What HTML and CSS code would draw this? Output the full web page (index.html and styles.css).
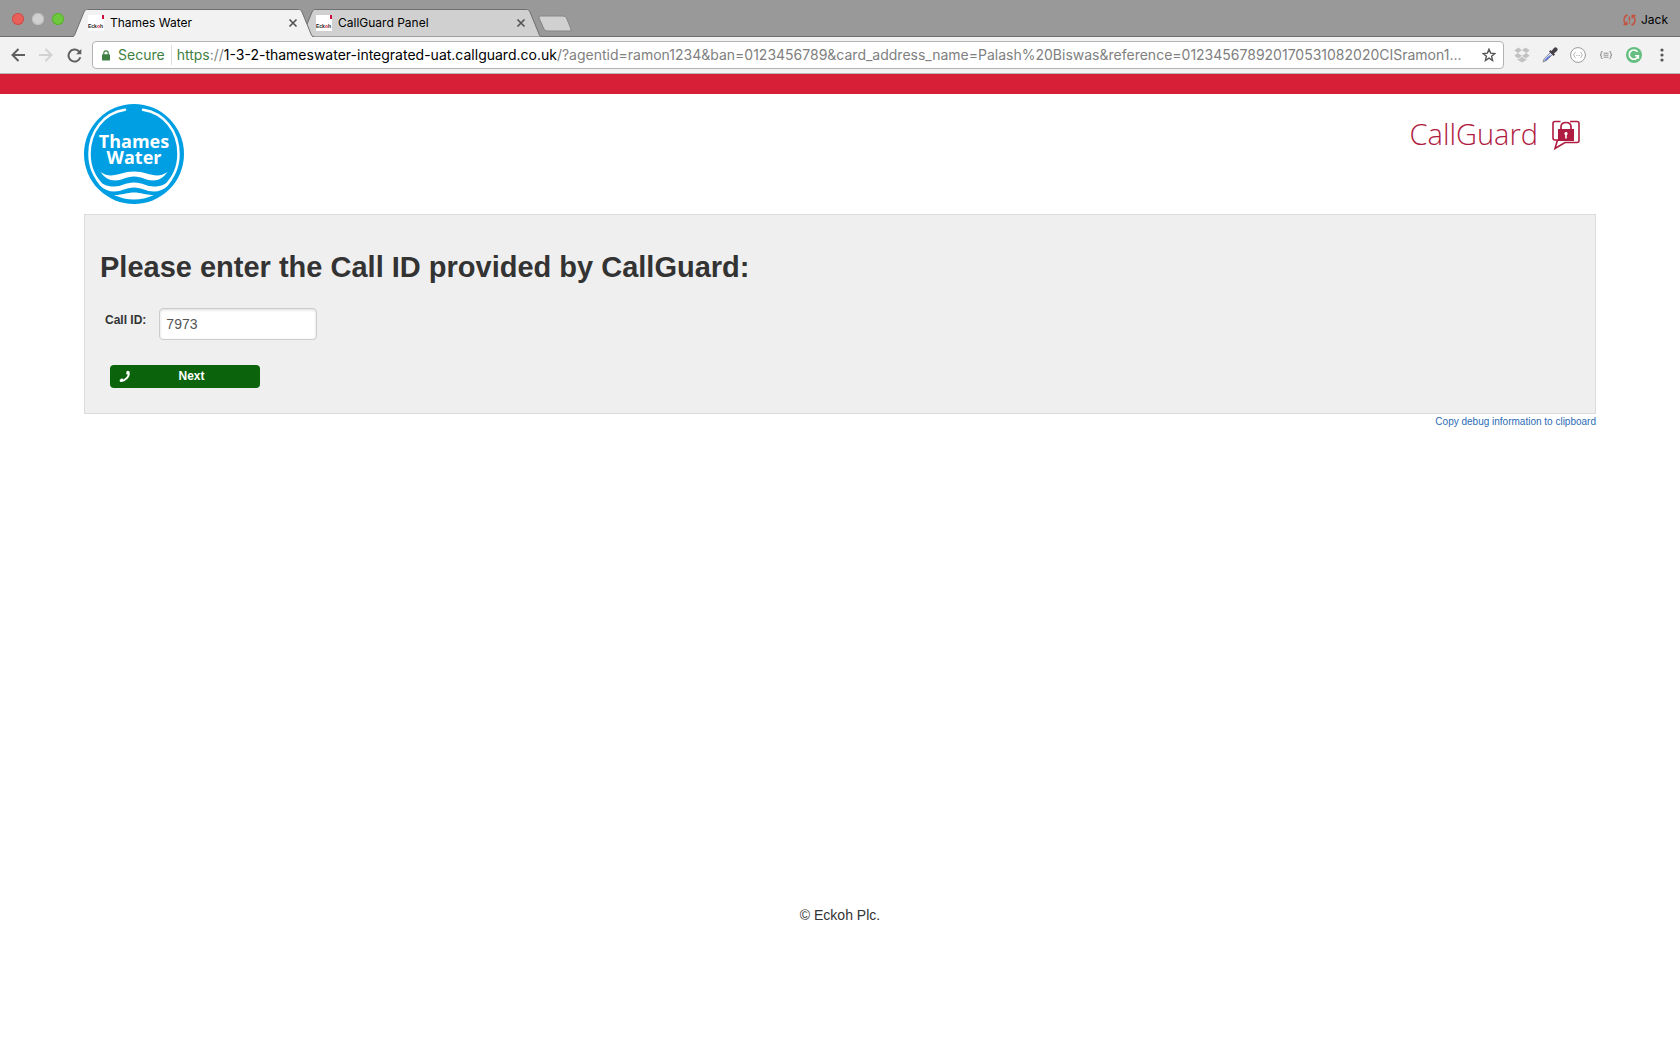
FILE: index.html
```html
<!DOCTYPE html>
<html lang="en">
<head>
<meta charset="utf-8">
<title>Thames Water</title>
<link rel="stylesheet" href="styles.css">
</head>
<body>
<svg class="defs" aria-hidden="true">
  <symbol id="tab-shape" viewBox="0 0 242 28"><path d="M0 27.500 C2 27.500 2.500 26.500 3 25 L12 3 C13 1 13.500 .5 15.500 .5 H226.500 C228.500 .5 229 1 230 3 L239 25 C239.500 26.500 240 27.500 242 27.500"/></symbol>
  <symbol id="close" viewBox="0 0 10 10"><path d="M1.500 1.500 8.500 8.500M8.500 1.500 1.500 8.500" stroke="#555" stroke-width="1.700"/></symbol>
</svg>

<header class="browser">
  <div class="tabstrip">
    <div class="lights"><i class="light red"></i><i class="light grey"></i><i class="light green"></i></div>
    <div class="tabs">
      <div class="tab active">
        <svg class="tab-bg"><use href="#tab-shape"/></svg>
        <svg class="favicon" viewBox="0 0 16 16"><rect width="16" height="16" fill="#fff"/><text x="0" y="13">Eck<tspan fill="#d0103a">o</tspan>h</text><rect x="14" y="0" width="2" height="4" fill="#d0103a"/></svg>
        <span class="tab-title">Thames Water</span>
        <button class="tab-close" aria-label="Close tab"><svg><use href="#close"/></svg></button>
      </div>
      <div class="tab">
        <svg class="tab-bg"><use href="#tab-shape"/></svg>
        <svg class="favicon" viewBox="0 0 16 16"><rect width="16" height="16" fill="#fff"/><text x="0" y="13">Eck<tspan fill="#d0103a">o</tspan>h</text><rect x="14" y="0" width="2" height="4" fill="#d0103a"/></svg>
        <span class="tab-title">CallGuard Panel</span>
        <button class="tab-close" aria-label="Close tab"><svg><use href="#close"/></svg></button>
      </div>
    </div>
    <button class="new-tab" aria-label="New tab"><svg width="34" height="18" viewBox="0 0 34 18"><path d="M2.500 1 H25 Q27.500 1 28.500 3 L33 14 Q33.500 16 31.500 16 H9 Q7 16 6 14 L1 3 Q.5 1 2.500 1Z" fill="#d0d0d0" stroke="#858585"/></svg></button>
    <button class="profile"><svg width="13" height="12" viewBox="0 0 13 12" fill="none" stroke="#c5503f" stroke-width="1.400"><path d="M4.500 1 C.5 2 0 8 3 10.500 M.5 10.500 H3.700 V7.500 M8.500 11 C12.500 10 13 4 10 1.500 M12.500 1.500 H9.300 V4.500 M6.500 2.500 V7 M6.500 8.300 V9.800"/></svg>Jack</button>
  </div>
  <div class="toolbar">
    <div class="navs">
      <button class="nav" aria-label="Back"><svg width="14" height="14" viewBox="0 0 14 14" stroke="#5f5f5f"><path d="M14 7H1.500M7.500 1 1.500 7l6 6"/></svg></button>
      <button class="nav" aria-label="Forward"><svg width="14" height="14" viewBox="0 0 14 14" stroke="#d2d2d2"><path d="M0 7H12.500M6.500 1l6 6-6 6"/></svg></button>
      <button class="nav" aria-label="Reload"><svg width="15" height="15" viewBox="0 0 15 15" stroke="#5f5f5f"><path d="M13.300 9.300A6 6 0 1 1 11.800 3.300L13 4.500"/><path d="M14.300 1V6.200H9.100Z" fill="#5f5f5f" stroke="none"/></svg></button>
    </div>
    <div class="omnibox">
      <svg width="8" height="11" viewBox="0 0 9 12"><path d="M2 6V3.300a2.500 2.500 0 0 1 5 0V6" fill="none" stroke="#3f7f43" stroke-width="1.300"/><rect x="0" y="4.700" width="9" height="7" rx="1" fill="#3f7f43"/></svg>
      <span class="secure">Secure</span>
      <div class="url" role="textbox" aria-label="Address"><span class="scheme">https</span>://<span class="host">1-3-2-thameswater-integrated-uat.callguard.co.uk</span>/?agentid=ramon1234&amp;ban=0123456789&amp;card_address_name=Palash%20Biswas&amp;reference=012345678920170531082020CISramon1...</div>
      <button class="star" aria-label="Bookmark this page"><svg width="14" height="14" viewBox="0 0 14 14"><path d="M7 1.200 8.600 5.100 12.900 5.500 9.600 8.300 10.600 12.500 7 10.200 3.400 12.500 4.400 8.300 1.100 5.500 5.400 5.100Z" fill="none" stroke="#555" stroke-width="1.400"/></svg></button>
    </div>
    <div class="extensions">
      <button aria-label="Dropbox"><svg width="16" height="16" viewBox="0 0 16 16" fill="#c2c2c2"><path d="M4.500 .5 8 3.300 3.700 6 .3 3.300ZM11.500 .5 15.700 3.300 12.300 6 8 3.300ZM3.700 6 8 8.700 4.500 11.500 .3 8.700ZM12.300 6 15.700 8.700 11.500 11.500 8 8.700ZM8 9.700 11.500 12.400 12.700 11.700V12.800L8 15.600 3.300 12.800V11.700L4.500 12.400Z"/></svg></button>
      <button aria-label="Colour picker"><svg width="16" height="16" viewBox="0 0 16 16"><path d="M9 5 11 7 4.500 13.500 1 15 2.300 11.500Z" fill="#d9e0f5" stroke="#777" stroke-width=".8"/><path d="M4 11.500 7.500 8.500 9 8.500 4.500 13 2 14.300Z" fill="#4768d8"/><path d="M7 4.500 8.500 3 9.500 4 12 1Q13.500-.3 15 1 16.300 2.500 15 4L12 6.500 13 7.500 11.500 9Z" fill="#484048"/></svg></button>
      <button aria-label="JSON viewer"><svg width="16" height="16" viewBox="0 0 16 16" fill="none" stroke="#999"><circle cx="8" cy="8" r="7.400" fill="#fff"/><path d="M5.500 5.500Q4.500 5.500 4.500 6.500T3.500 8Q4.500 8.500 4.500 9.500T5.500 10.500M10.500 5.500Q11.500 5.500 11.500 6.500T12.500 8Q11.500 8.500 11.500 9.500T10.500 10.500" stroke-width=".8"/><path d="M6.300 8.500h3.600" stroke-width=".8" stroke-dasharray=".8 .6"/></svg></button>
      <button aria-label="JSON formatter"><svg width="16" height="16" viewBox="0 0 16 16" fill="none" stroke="#888"><path d="M4.500 4.500H4Q3.200 4.500 3.200 5.300V7Q3.200 8 2 8 3.200 8 3.200 9V10.700Q3.200 11.500 4 11.500H4.500M11.500 4.500H12Q12.800 4.500 12.800 5.300V7Q12.800 8 14 8 12.800 8 12.800 9V10.700Q12.800 11.500 12 11.500H11.500"/><path d="M5.500 6.200h5M5.500 8.200h5M5.500 10.200h5" stroke-width=".9"/></svg></button>
      <button aria-label="Grammarly"><svg width="16" height="16" viewBox="0 0 16 16"><circle cx="8" cy="8" r="8" fill="#66bf80"/><path d="M11.500 4.800A4.600 4.600 0 1 0 12.300 8.700H9M12.300 8.700V11.800" fill="none" stroke="#fff" stroke-width="1.600"/></svg></button>
      <button aria-label="Menu"><svg width="16" height="16" viewBox="0 0 16 16" fill="#555"><circle cx="8" cy="3" r="1.600"/><circle cx="8" cy="8" r="1.600"/><circle cx="8" cy="13" r="1.600"/></svg></button>
    </div>
  </div>
</header>

<div class="brand-bar"></div>
<div class="page">
  <div class="masthead">
    <svg width="100" height="100" viewBox="0 0 100 100" role="img" aria-label="Thames Water">
      <circle cx="50" cy="50" r="50" fill="#009fe3"/>
      <path d="M41 5.800C20 9 5.500 27 5.500 50A44.500 44.500 0 0 0 19 82" fill="none" stroke="#fff" stroke-width="2.500" stroke-linecap="round"/>
      <path d="M59 5.800C80 9 94.500 27 94.500 50A44.500 44.500 0 0 1 81 82" fill="none" stroke="#fff" stroke-width="2.500" stroke-linecap="round"/>
      <text class="thames" x="50" y="44" text-anchor="middle">Thames</text>
      <text class="thames" x="50" y="60" text-anchor="middle">Water</text>
      <g fill="#fff">
        <path d="M16.500 68C28 76 36 67.500 50 67.500S72 76 83.500 68C80 73 75 76.500 69 76.500 62 76.500 58 72.500 50 72.500S38 76.500 31 76.500C25 76.500 20 73 16.500 68Z"/>
        <path d="M11 74.500C17 80 23 82.500 30 82.500 38 82.500 41 78.500 50 78.500S62 82.500 70 82.500C77 82.500 83 80 89 74.500L84 81.500C80 85.500 75 87.500 70 87.500 62 87.500 58 83.500 50 83.500S38 87.500 30 87.500C25 87.500 20 85.500 16 81.500Z"/>
        <path d="M30 91C39 91 43 88.500 50 88.500S61 91 70 91C63 94 57 95.500 50 95.500S37 94 30 91Z"/>
      </g>
    </svg>
    <div class="callguard">
      <span>CallGuard</span>
      <svg width="28" height="31" viewBox="0 0 28 31"><path d="M8.500 1.500H3Q1 1.500 1 3.500V18Q1 20 3 20H5.500L3 28.500 13 22.500H25Q27 22.500 27 20.500V3.500Q27 1.500 25 1.500H18" fill="none" stroke="#b01c41" stroke-width="1.600"/><path d="M9 10V7Q9 2.500 14 2.500T19 7V10" fill="none" stroke="#b01c41" stroke-width="1.700"/><rect x="6" y="9" width="16" height="12" fill="#b01c41"/><path d="M14 12a1.600 1.600 0 0 1 .8 3V18.500h-1.600V15A1.600 1.600 0 0 1 14 12Z" fill="#fff"/></svg>
    </div>
  </div>
  <main>
    <form class="panel">
      <h1>Please enter the Call ID provided by CallGuard:</h1>
      <div class="field">
        <label for="call-id">Call ID:</label>
        <input id="call-id" type="text" value="7973">
      </div>
      <button class="next" type="button"><svg width="12" height="13" viewBox="0 0 12 13"><path d="M8.800 .8 10.500 1.500Q11.500 6 8 9.300T1 11.800L.5 10 3 8.300 4.600 9.500Q8 7.800 8.800 4.800L7.200 4 7.500 1.500Z" fill="#fff"/></svg><span>Next</span></button>
    </form>
    <div class="debug"><a href="#">Copy debug information to clipboard</a></div>
  </main>
  <footer>© Eckoh Plc.</footer>
</div>
</body>
</html>
```
FILE: styles.css
```css
* { box-sizing: border-box; }
body { margin: 0; background: #fff; color: #333; font-family: "Liberation Sans", Arial, sans-serif; font-size: 14px; line-height: 20px; }
button { border: 0; padding: 0; background: none; font: inherit; color: inherit; }
svg { display: block; flex: none; }
.defs { position: absolute; width: 0; height: 0; }

.browser { font-family: Inter, sans-serif; color: #000; }
.tabstrip { display: flex; align-items: flex-end; height: 37px; background: #999; box-shadow: inset 0 -1px #6f6f6f; }
.lights { display: flex; gap: 8px; width: 72px; padding: 0 0 12px 12px; }
.light { width: 12px; height: 12px; border-radius: 50%; }
.red { background: #e9605a; box-shadow: inset 0 0 0 1px #c8504a; }
.grey { background: #d0d0d0; box-shadow: inset 0 0 0 1px #bcbcbc; }
.green { background: #6fc93f; box-shadow: inset 0 0 0 1px #58ae2e; }
.tabs { display: flex; }
.tab { position: relative; display: flex; align-items: center; width: 242px; height: 28px; padding: 0 16px; font-size: 12px; }
.tab + .tab { margin-left: -14px; }
.tab.active { z-index: 1; }
.tab-bg { position: absolute; inset: 0; width: 242px; height: 28px; fill: #d0d0d0; stroke: #6f6f6f; }
.active .tab-bg { fill: #f2f2f2; }
.active::after { content: ""; position: absolute; left: 2px; right: 2px; bottom: 0; height: 1px; background: #f2f2f2; }
.favicon { position: relative; width: 16px; height: 16px; font: 700 5px "Liberation Sans", sans-serif; fill: #222; }
.tab-title { position: relative; flex: 1; padding-left: 6px; }
.tab-close { position: relative; }
.tab-close svg { width: 10px; height: 10px; }
.new-tab { margin: 0 0 4px -4px; }
.profile { display: flex; align-items: center; gap: 5px; margin-left: auto; padding: 0 12px 7px 0; font-size: 12px; }

.toolbar { display: flex; align-items: center; height: 37px; padding: 0 10px; background: #f2f2f2; border-bottom: 1px solid #b8b8b8; }
.navs { display: flex; gap: 12px; margin-right: 10px; }
.nav { display: flex; justify-content: center; width: 16px; }
.nav svg { fill: none; stroke-width: 2; }
.omnibox { display: flex; flex: 1; align-items: center; min-width: 0; height: 28px; margin-right: 10px; padding: 0 7px 0 9px; background: #fff; border: 1px solid #b4b4b4; border-radius: 4px; font-size: 14px; }
.secure { margin-left: 8px; padding-right: 6px; color: #3f7f43; border-right: 1px solid #ddd; }
.url { flex: 1; min-width: 0; padding-left: 5px; overflow: hidden; white-space: nowrap; color: #808080; }
.scheme { color: #3f7f43; }
.host { color: #000; }
.extensions { display: flex; gap: 12px; }

.brand-bar { height: 20px; background: #d72038; }
.page { width: 90%; margin: 0 auto; }
.masthead { display: flex; justify-content: space-between; padding: 10px 16px 10px 0; }
.thames { font: 700 18px "Open Sans", sans-serif; fill: #fff; }
.callguard { display: flex; align-items: flex-start; gap: 14px; height: 60px; padding-top: 16px; color: #b01c41; font: 300 29px/28px "Open Sans", sans-serif; }
main { min-height: 691px; }
.panel { height: 200px; padding: 32px 15px 0; background: #efefef; border: 1px solid #ddd; }
h1 { margin: 0; font-size: 29px; line-height: 40px; color: #333; }
.field { display: flex; padding: 21px 0 0 5px; }
.field label { margin-right: 13px; font-size: 12px; font-weight: 700; line-height: 24px; }
.field input { width: 158px; height: 32px; padding: 4px 6px; border: 1px solid #ccc; border-radius: 4px; background: #fff; box-shadow: inset 0 1px 3px rgba(0, 0, 0, .15); color: #555; font: inherit; }
.next { display: flex; align-items: center; width: 150px; height: 23px; margin: 25px 0 0 10px; padding-left: 9px; border-radius: 4px; background: #0b640b; color: #fff; font-size: 12px; font-weight: 700; }
.next span { flex: 1; padding: 0 8px 2px 0; }
.debug { text-align: right; font-size: 10px; line-height: 16px; }
.debug a { color: #2a6cb5; text-decoration: none; }
footer { text-align: center; }
```
